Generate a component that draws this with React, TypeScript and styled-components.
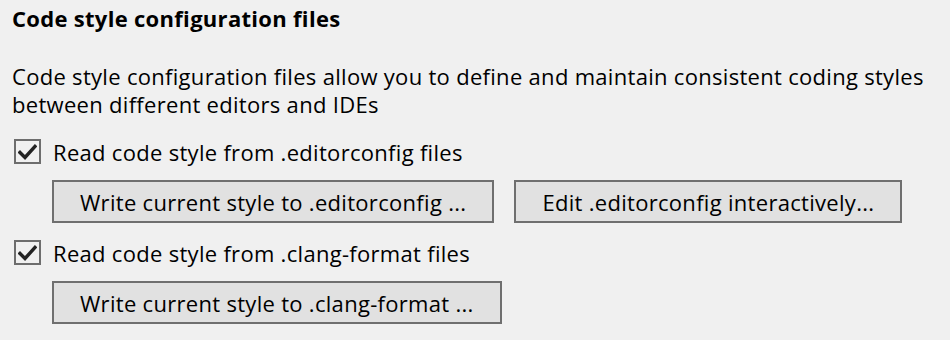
import React from "react";
import styled, { createGlobalStyle } from "styled-components";

const GlobalStyle = createGlobalStyle`
	html, body {
		margin: 0;
		padding: 0;
		background: #f0f0f0;
	}
	body {
		font-family: "Open Sans", "Noto Sans", sans-serif;
		font-size: 22px;
		letter-spacing: 0.3px;
		color: #000;
	}
`;

const Page = styled.div`
	display: flex;
	flex-direction: column;
	align-items: flex-start;
	padding: 4px 12px 0 12px;
	width: 950px;
	height: 340px;
	box-sizing: border-box;
	line-height: 28px;
`;

const Title = styled.div`
	font-weight: 700;
`;

const Description = styled.div`
	margin-top: 30px;
	max-width: 926px;
`;

const CheckRow = styled.label<{ $gap: number }>`
	display: flex;
	align-items: flex-start;
	gap: 12px;
	margin-top: ${p => p.$gap}px;
	margin-left: 2px;
	cursor: default;
`;

const Box = styled.span`
	display: flex;
	align-items: center;
	justify-content: center;
	width: 27px;
	height: 25px;
	margin-top: 1px;
	box-sizing: border-box;
	border: 2px solid #6d6d6d;
	background: #f0f0f0;
`;

const ButtonRow = styled.div`
	display: flex;
	gap: 20px;
	margin-top: 14px;
	margin-left: 40px;
`;

const Button = styled.button`
	font: inherit;
	letter-spacing: inherit;
	line-height: 28px;
	height: 43px;
	padding: 0 26px;
	border: 2px solid #6f6f6f;
	background: #e1e1e1;
	color: #000;
	white-space: nowrap;
	cursor: default;
`;

const Check = () => (
	<svg width="19" height="16" viewBox="0 0 19 16">
		<polyline
			points="2,8.5 7,13.5 17,2.5"
			fill="none"
			stroke="#222"
			strokeWidth="3.4"
			strokeLinecap="square"
			strokeLinejoin="miter"
		/>
	</svg>
);

const Checkbox = (props: { label: string; gap: number }) => (
	<CheckRow $gap={props.gap}>
		<Box>
			<Check />
		</Box>
		<span>{props.label}</span>
	</CheckRow>
);

export default function App() {
	return (
		<Page>
			<GlobalStyle />
			<Title>Code style configuration files</Title>
			<Description>
				Code style configuration files allow you to define and maintain consistent coding styles
				between different editors and IDEs
			</Description>
			<Checkbox label="Read code style from .editorconfig files" gap={20} />
			<ButtonRow>
				<Button>Write current style to .editorconfig ...</Button>
				<Button>Edit .editorconfig interactively...</Button>
			</ButtonRow>
			<Checkbox label="Read code style from .clang-format files" gap={16} />
			<ButtonRow>
				<Button>Write current style to .clang-format ...</Button>
			</ButtonRow>
		</Page>
	);
}
